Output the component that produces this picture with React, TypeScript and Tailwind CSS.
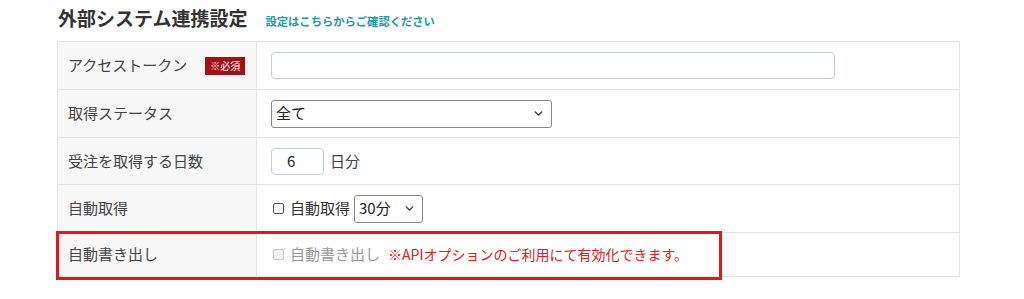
import { ChevronDown } from "lucide-react";

const font = { fontFamily: '"Noto Sans CJK JP", "Noto Sans", sans-serif' };

function Row({ label, badge, h = "h-[48px]", children }: { label: string; badge?: boolean; h?: string; children: React.ReactNode }) {
  return (
    <div className={`flex ${h} border-b border-[#e4e4e4]`}>
      <div className="w-[199px] shrink-0 bg-[#f7f7f7] border-r border-[#e4e4e4] flex items-center pl-[10px] text-[15px] text-[#444]">
        <span>{label}</span>
        {badge && (
          <span className="ml-[18px] bg-[#a50f15] text-white text-[10px] leading-none px-[5px] py-[4px]">※必須</span>
        )}
      </div>
      <div className="flex-1 flex items-center pl-[14px]">{children}</div>
    </div>
  );
}

function Select({ value, w }: { value: string; w: string }) {
  return (
    <div className={`${w} h-[28px] border border-[#8a8a8a] rounded-[3px] flex items-center justify-between pl-[4px] pr-[6px] text-[15px] text-[#222]`}>
      <span>{value}</span>
      <ChevronDown size={13} strokeWidth={2.5} className="text-[#333]" />
    </div>
  );
}

export default function App() {
  return (
    <div className="w-[1024px] h-[299px] bg-white pl-[57px] pt-[4px]" style={font}>
      <div className="flex items-baseline h-[37px] pl-[1px]">
        <h2 className="text-[19px] font-bold text-[#333]">外部システム連携設定</h2>
        <span className="ml-[18px] text-[11.3px] font-bold text-[#1a9c9a]">設定はこちらからご確認ください</span>
      </div>
      <div className="relative w-[903px] border-t border-x border-[#e4e4e4]">
        <Row label="アクセストークン" badge>
          <div className="w-[564px] h-[27px] border border-[#c3cde0] rounded-[4px]" />
        </Row>
        <Row label="取得ステータス">
          <Select value="全て" w="w-[281px]" />
        </Row>
        <Row label="受注を取得する日数" h="h-[47px]">
          <div className="w-[53px] h-[27px] border border-[#c3cde0] rounded-[4px] flex items-center pl-[15px] text-[15px] text-[#222]">6</div>
          <span className="ml-[6px] text-[15px] text-[#444]">日分</span>
        </Row>
        <Row label="自動取得">
          <span className="w-[11px] h-[11px] border border-[#555] rounded-[2px] ml-[2px]" />
          <span className="ml-[6px] text-[15px] text-[#333]">自動取得</span>
          <div className="ml-[4px]">
            <Select value="30分" w="w-[69px]" />
          </div>
        </Row>
        <Row label="自動書き出し" h="h-[44px]">
          <span className="w-[11px] h-[11px] border border-[#c8c8c8] bg-[#f2f2f2] rounded-[2px] ml-[2px]" />
          <span className="ml-[6px] text-[15px] text-[#999]">自動書き出し</span>
          <span className="ml-[8px] text-[14px] text-[#e02020]">※APIオプションのご利用にて有効化できます。</span>
        </Row>
        <div className="absolute left-[-2px] top-[189px] w-[666px] h-[49px] border-[3px] border-[#e5141e] pointer-events-none" />
      </div>
    </div>
  );
}
